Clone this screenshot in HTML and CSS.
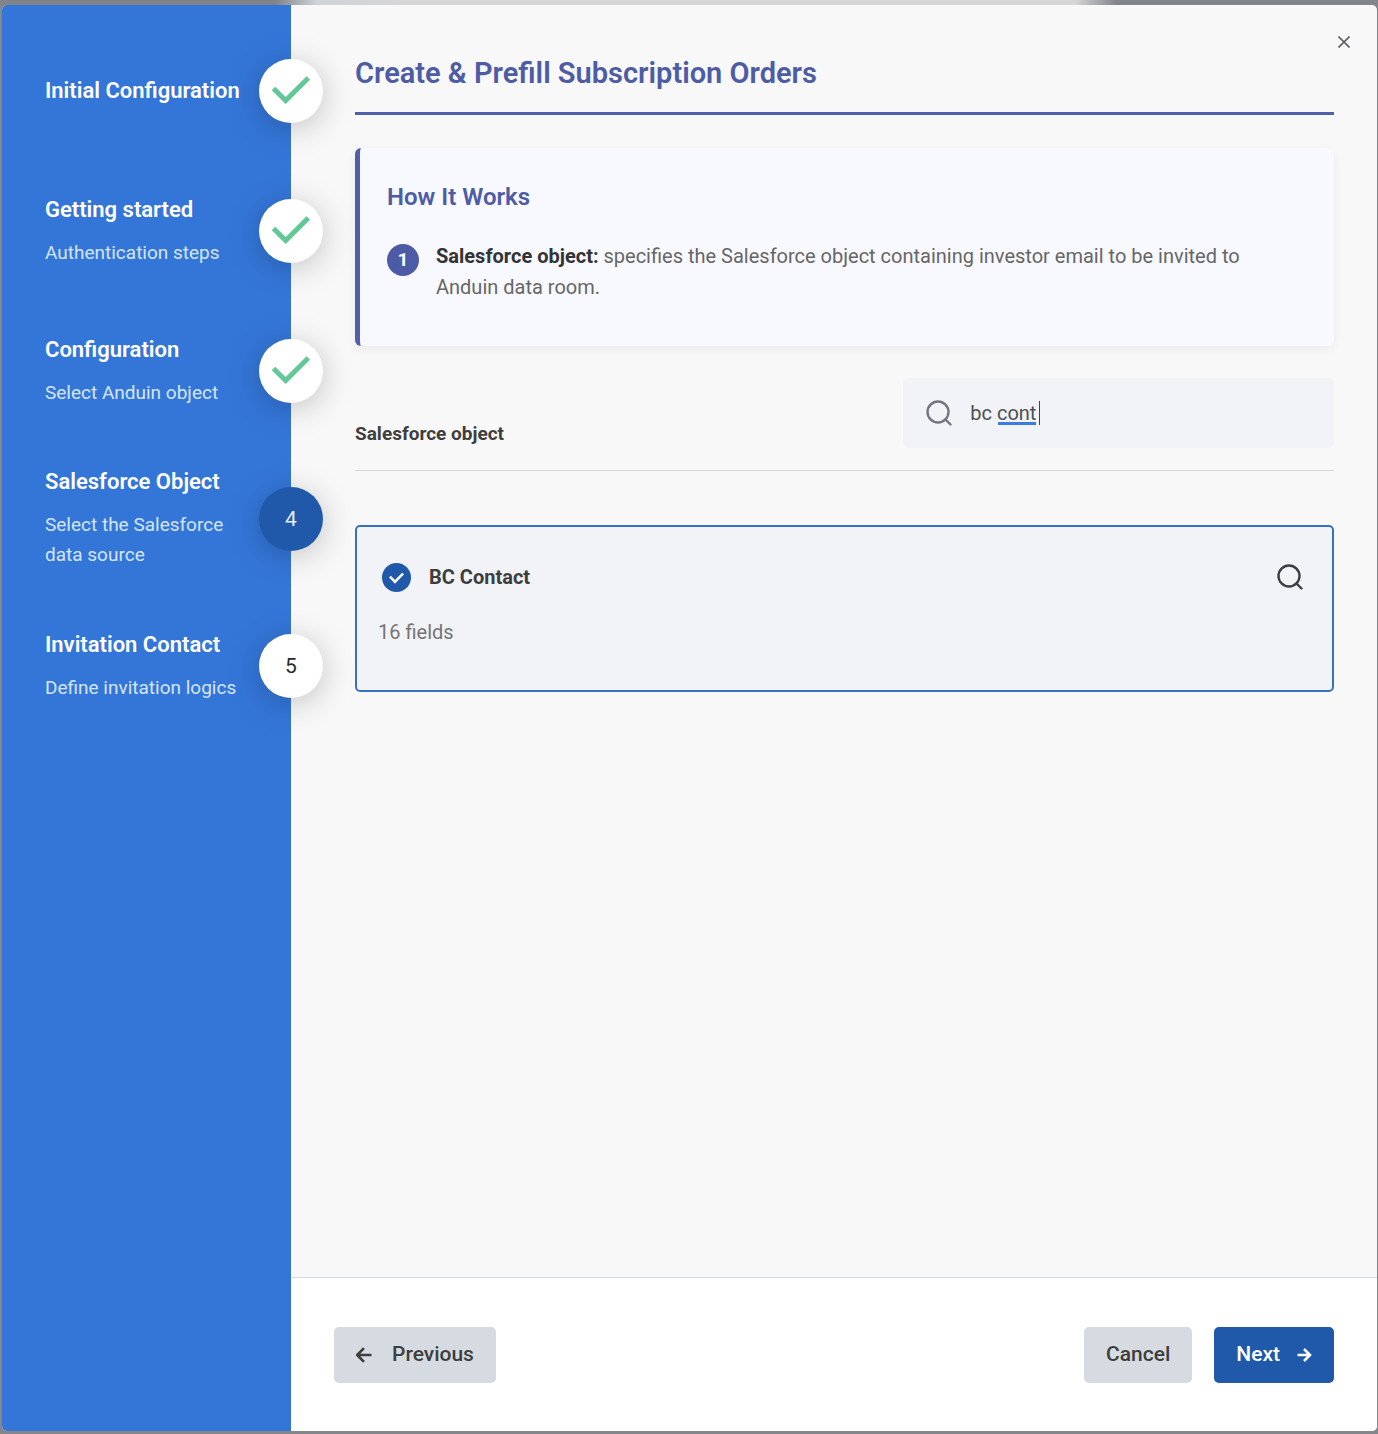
FILE: index.html
```html
<!DOCTYPE html>
<html lang="en">
<head>
    <meta charset="UTF-8">
    <meta name="viewport" content="width=device-width, initial-scale=1.0">
    <title>Create &amp; Prefill Subscription Orders</title>
    <link rel="stylesheet" href="styles.css">
</head>
<body>
    <div class="dialog" role="dialog" aria-labelledby="dialog-title">
        <nav class="sidebar">
            <ol class="steps">
                <li class="step">
                    <div class="step-text">
                        <h3>Initial Configuration</h3>
                    </div>
                    <span class="step-circle">
                        <svg viewBox="0 0 64 64"><path d="M14.5 29.5 26.7 41.5 49.3 19"/></svg>
                    </span>
                </li>
                <li class="step">
                    <div class="step-text">
                        <h3>Getting started</h3>
                        <p>Authentication steps</p>
                    </div>
                    <span class="step-circle">
                        <svg viewBox="0 0 64 64"><path d="M14.5 29.5 26.7 41.5 49.3 19"/></svg>
                    </span>
                </li>
                <li class="step">
                    <div class="step-text">
                        <h3>Configuration</h3>
                        <p>Select Anduin object</p>
                    </div>
                    <span class="step-circle">
                        <svg viewBox="0 0 64 64"><path d="M14.5 29.5 26.7 41.5 49.3 19"/></svg>
                    </span>
                </li>
                <li class="step">
                    <div class="step-text">
                        <h3>Salesforce Object</h3>
                        <p>Select the Salesforce data source</p>
                    </div>
                    <span class="step-circle current">4</span>
                </li>
                <li class="step">
                    <div class="step-text">
                        <h3>Invitation Contact</h3>
                        <p>Define invitation logics</p>
                    </div>
                    <span class="step-circle">5</span>
                </li>
            </ol>
        </nav>

        <div class="main">
            <button class="close" type="button" aria-label="Close">
                <svg viewBox="0 0 12 12"><path d="M0.5 0.5 11.5 11.5M11.5 0.5 0.5 11.5"/></svg>
            </button>

            <div class="content">
                <h1 id="dialog-title">Create &amp; Prefill Subscription Orders</h1>

                <section class="info">
                    <h2>How It Works</h2>
                    <div class="info-item">
                        <span class="info-number">1</span>
                        <p><strong>Salesforce object:</strong> specifies the Salesforce object containing investor email to be invited to Anduin data room.</p>
                    </div>
                </section>

                <div class="toolbar">
                    <label for="search">Salesforce object</label>
                    <div class="search">
                        <svg class="icon-search" viewBox="0 0 26 26"><circle cx="12" cy="12" r="10.5"/><path d="M19.5 19.5 24.5 24.5"/></svg>
                        <div class="search-field">
                            <input id="search" type="text" value="bc cont" autocomplete="off">
                        </div>
                    </div>
                </div>

                <div class="card">
                    <div class="card-head">
                        <input id="bc-contact" type="checkbox" checked>
                        <label for="bc-contact">BC Contact</label>
                        <button class="card-search" type="button" aria-label="View fields">
                            <svg class="icon-search" viewBox="0 0 26 26"><circle cx="12" cy="12" r="10.5"/><path d="M19.5 19.5 24.5 24.5"/></svg>
                        </button>
                    </div>
                    <p>16 fields</p>
                </div>
            </div>

            <footer class="footer">
                <button class="btn btn-previous" type="button">
                    <svg viewBox="0 0 16 16"><path d="M15.5 8H1.5M8 1.2 1.2 8 8 14.8"/></svg>
                    Previous
                </button>
                <button class="btn" type="button">Cancel</button>
                <button class="btn btn-next" type="button">
                    Next
                    <svg viewBox="0 0 16 16"><path d="M1.5 8H14M8 2 14 8 8 14"/></svg>
                </button>
            </footer>
        </div>
    </div>
</body>
</html>
```

FILE: styles.css
```css
* {
    box-sizing: border-box;
}
body {
    display: flex;
    min-height: 100vh;
    margin: 0;
    padding: 5px 1px 3px 2px;
    font-family: Roboto, sans-serif;
    font-size: 20px;
    line-height: 30px;
    color: #3e3e3e;
    background: linear-gradient(to right, #808388 20%, #d0d4d8 23%, #d6d6d6 30%, #d6d6d6 78%, #82858c 81%) top / 100% 5px no-repeat #85868b;
}
h1, h2, h3, p, ol {
    margin: 0;
    padding: 0;
}
button, input {
    font: inherit;
    color: inherit;
}
button {
    border: 0;
    cursor: pointer;
}
svg {
    display: block;
    fill: none;
    stroke: currentColor;
}

.dialog {
    display: flex;
    flex: 1;
    border-radius: 5px;
    background: #f8f8f8;
    overflow: hidden;
}

/* Sidebar */
.sidebar {
    position: relative;
    z-index: 1;
    flex: 0 0 289px;
    padding: 42px 0 42px 43px;
    background: #3476d8;
}
.steps {
    display: flex;
    flex-direction: column;
    gap: 52px;
    list-style: none;
}
.step {
    display: flex;
    align-items: center;
    min-height: 88px;
    margin-right: -32px;
}
.step-text {
    flex: 1;
    color: #fff;
}
.step-text h3 {
    font-size: 22px;
    font-weight: 600;
    line-height: 30px;
    white-space: nowrap;
}
.step-text p {
    margin-top: 13px;
    font-size: 19px;
    color: #d3e5fa;
}
.step-circle {
    display: flex;
    flex: 0 0 64px;
    align-items: center;
    justify-content: center;
    height: 64px;
    border-radius: 50%;
    font-size: 21px;
    color: #2b2b2b;
    background: #fff;
    box-shadow: 0 5px 32px rgba(0, 0, 0, 0.22);
}
.step-circle svg {
    width: 64px;
    height: 64px;
    stroke: #62c898;
    stroke-width: 5;
}
.step-circle.current {
    color: #e4eefa;
    background: #2059a9;
}

/* Main area */
.main {
    position: relative;
    display: flex;
    flex: 1;
    flex-direction: column;
    min-width: 0;
}
.close {
    position: absolute;
    top: 21px;
    right: 17px;
    padding: 10px;
    color: #56616d;
    background: none;
}
.close svg {
    width: 12px;
    height: 12px;
    stroke-width: 1.6;
}
.content {
    flex: 1;
    padding: 48px 43px 48px 64px;
}
h1 {
    padding-bottom: 19px;
    border-bottom: 3px solid #4f5fa8;
    font-size: 29px;
    font-weight: 600;
    line-height: 40px;
    color: #4d5ca5;
}
.info {
    margin-top: 33px;
    padding: 33px 64px 43px 27px;
    border-left: 5px solid #4f5fa8;
    border-radius: 6px;
    background: #f8f9ff;
    box-shadow: 0 3px 11px rgba(0, 0, 0, 0.06);
}
.info h2 {
    font-size: 24px;
    font-weight: 600;
    line-height: 32px;
    color: #4d5ca5;
}
.info-item {
    display: flex;
    gap: 17px;
    margin-top: 28px;
}
.info-item p {
    color: #666;
    line-height: 31px;
}
.info-item strong {
    color: #333;
}
.info-number {
    display: flex;
    flex: 0 0 32px;
    align-items: center;
    justify-content: center;
    height: 32px;
    margin-top: 3px;
    border-radius: 50%;
    font-size: 19px;
    font-weight: 700;
    color: #fff;
    background: #4d5ba6;
}

.toolbar {
    display: flex;
    align-items: flex-end;
    justify-content: space-between;
    margin-top: 32px;
    padding-bottom: 22px;
    border-bottom: 1px solid #d8d8da;
}
.toolbar label {
    font-size: 19px;
    font-weight: 700;
    line-height: 28px;
}
.search {
    display: flex;
    align-items: center;
    gap: 18px;
    width: 44%;
    height: 70px;
    padding: 0 23px;
    border-radius: 5px;
    background: #f1f3f7;
}
.icon-search {
    flex: none;
    width: 26px;
    height: 26px;
    stroke-width: 2.4;
    stroke-linecap: round;
}
.search .icon-search {
    color: #747582;
}
.search-field {
    position: relative;
    flex: 1;
}
.search-field input {
    width: 100%;
    height: 30px;
    padding: 0;
    border: 0;
    outline: 0;
    color: #505050;
    background: none;
}
/* spelling mark and text cursor */
.search-field::after {
    content: "";
    position: absolute;
    top: 3px;
    left: 28px;
    width: 41px;
    height: 24px;
    border-right: 1px solid #444;
    background: linear-gradient(#3a7be0, #3a7be0) left bottom / 38px 3px no-repeat;
}

.card {
    margin-top: 54px;
    padding: 35px 29px 43px 21px;
    border: 2px solid #3672c0;
    border-radius: 5px;
    background: #f1f3f7;
}
.card-head {
    display: flex;
    align-items: center;
    gap: 18px;
    padding-left: 4px;
}
.card-head label {
    font-weight: 700;
}
.card-head input {
    display: flex;
    align-items: center;
    justify-content: center;
    width: 29px;
    height: 29px;
    margin: 0;
    border-radius: 50%;
    background: #2059a9;
    appearance: none;
}
.card-head input::before {
    content: "";
    width: 12px;
    height: 7px;
    margin-bottom: 3px;
    border: solid #fff;
    border-width: 0 0 3px 3px;
    transform: rotate(-45deg) scale(0.85);
}
.card-search {
    margin-left: auto;
    padding: 0;
    background: none;
}
.card p {
    margin-top: 25px;
    color: #757575;
}

/* Footer */
.footer {
    display: flex;
    gap: 22px;
    padding: 49px 43px 48px;
    border-top: 1px solid #cfdce8;
    background: #fff;
}
.btn {
    display: flex;
    align-items: center;
    gap: 16px;
    height: 56px;
    padding: 0 22px 3px;
    border-radius: 5px;
    font-size: 21px;
    font-weight: 500;
    background: #d5dbe1;
}
.btn svg {
    width: 16px;
    height: 16px;
    margin-top: 3px;
    stroke-width: 2.6;
}
.btn-previous {
    gap: 20px;
    margin-right: auto;
}
.btn-next {
    color: #fff;
    background: #2059a9;
}
```
